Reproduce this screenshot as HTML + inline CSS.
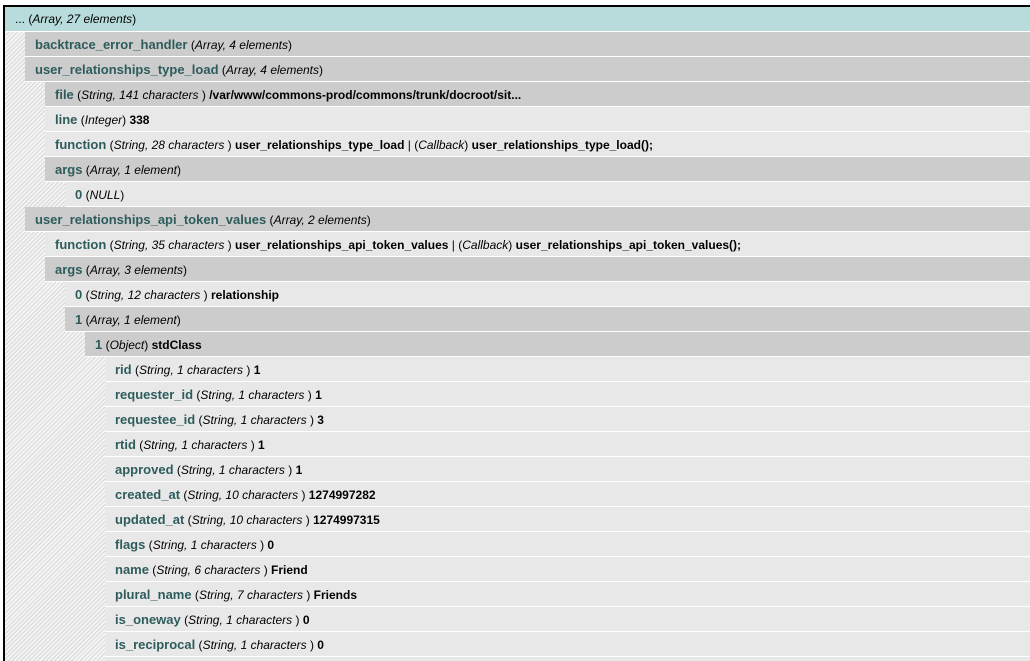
<!DOCTYPE html>
<html><head><meta charset="utf-8"><style>
html,body{margin:0;padding:0;background:#fff;width:1030px;height:661px;overflow:hidden;position:relative}
#wrap{position:absolute;left:0;top:0;width:1030px;height:661px;overflow:hidden}
#box{position:absolute;left:3px;top:5px;width:1025px;height:654px;border:2px solid #000;border-right:none;border-bottom:none;
background:repeating-linear-gradient(135deg,#f4f4f4 0,#f4f4f4 2px,#d8d8d8 2px,#d8d8d8 3px)}
.r{position:absolute;right:0;height:24px;line-height:25px;border-bottom:1px solid #fff;font-family:"Liberation Sans",sans-serif;font-size:12px;color:#000;white-space:nowrap;box-sizing:content-box;padding-left:10px;overflow:hidden}
.c{background:#cccccc}.l{background:#e8e8e8}.t{background:#b8dcdc}
.k{color:#2e5c5c;font-weight:bold;font-size:13px}
b{font-weight:bold}
</style></head><body><div id="wrap">
<div id="box"></div>
<div class="r t" style="left:5px;top:7px">... (<i>Array, 27 elements</i>)</div>
<div class="r c" style="left:25px;top:32px"><span class="k">backtrace_error_handler</span> (<i>Array, 4 elements</i>)</div>
<div class="r c" style="left:25px;top:57px"><span class="k">user_relationships_type_load</span> (<i>Array, 4 elements</i>)</div>
<div class="r c" style="left:45px;top:82px"><span class="k">file</span> (<i>String, 141 characters </i>) <b>/var/www/commons-prod/commons/trunk/docroot/sit...</b></div>
<div class="r l" style="left:45px;top:107px"><span class="k">line</span> (<i>Integer</i>) <b>338</b></div>
<div class="r l" style="left:45px;top:132px"><span class="k">function</span> (<i>String, 28 characters </i>) <b>user_relationships_type_load</b> | (<i>Callback</i>) <b>user_relationships_type_load();</b></div>
<div class="r c" style="left:45px;top:157px"><span class="k">args</span> (<i>Array, 1 element</i>)</div>
<div class="r l" style="left:65px;top:182px"><span class="k">0</span> (<i>NULL</i>)</div>
<div class="r c" style="left:25px;top:207px"><span class="k">user_relationships_api_token_values</span> (<i>Array, 2 elements</i>)</div>
<div class="r l" style="left:45px;top:232px"><span class="k">function</span> (<i>String, 35 characters </i>) <b>user_relationships_api_token_values</b> | (<i>Callback</i>) <b>user_relationships_api_token_values();</b></div>
<div class="r c" style="left:45px;top:257px"><span class="k">args</span> (<i>Array, 3 elements</i>)</div>
<div class="r l" style="left:65px;top:282px"><span class="k">0</span> (<i>String, 12 characters </i>) <b>relationship</b></div>
<div class="r c" style="left:65px;top:307px"><span class="k">1</span> (<i>Array, 1 element</i>)</div>
<div class="r c" style="left:85px;top:332px"><span class="k">1</span> (<i>Object</i>) <b>stdClass</b></div>
<div class="r l" style="left:105px;top:357px"><span class="k">rid</span> (<i>String, 1 characters </i>) <b>1</b></div>
<div class="r l" style="left:105px;top:382px"><span class="k">requester_id</span> (<i>String, 1 characters </i>) <b>1</b></div>
<div class="r l" style="left:105px;top:407px"><span class="k">requestee_id</span> (<i>String, 1 characters </i>) <b>3</b></div>
<div class="r l" style="left:105px;top:432px"><span class="k">rtid</span> (<i>String, 1 characters </i>) <b>1</b></div>
<div class="r l" style="left:105px;top:457px"><span class="k">approved</span> (<i>String, 1 characters </i>) <b>1</b></div>
<div class="r l" style="left:105px;top:482px"><span class="k">created_at</span> (<i>String, 10 characters </i>) <b>1274997282</b></div>
<div class="r l" style="left:105px;top:507px"><span class="k">updated_at</span> (<i>String, 10 characters </i>) <b>1274997315</b></div>
<div class="r l" style="left:105px;top:532px"><span class="k">flags</span> (<i>String, 1 characters </i>) <b>0</b></div>
<div class="r l" style="left:105px;top:557px"><span class="k">name</span> (<i>String, 6 characters </i>) <b>Friend</b></div>
<div class="r l" style="left:105px;top:582px"><span class="k">plural_name</span> (<i>String, 7 characters </i>) <b>Friends</b></div>
<div class="r l" style="left:105px;top:607px"><span class="k">is_oneway</span> (<i>String, 1 characters </i>) <b>0</b></div>
<div class="r l" style="left:105px;top:632px"><span class="k">is_reciprocal</span> (<i>String, 1 characters </i>) <b>0</b></div>
<div class="r l" style="left:105px;top:657px;height:4px;border:none"></div>
</div></body></html>
